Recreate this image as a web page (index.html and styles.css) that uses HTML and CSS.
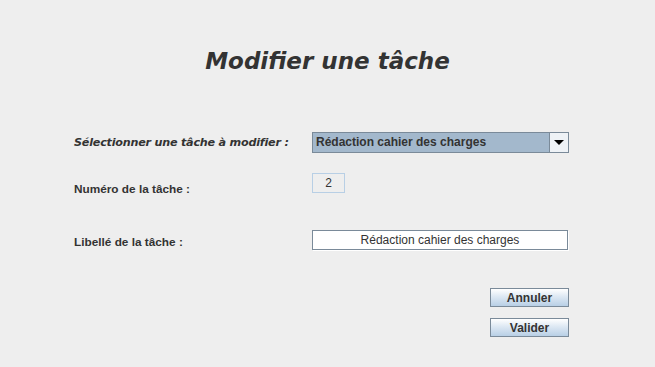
FILE: index.html
```html
<!DOCTYPE HTML>
<html lang="fr">
<head>
  <title>Modifier une tâche</title>
  <meta content="text/html;charset=utf-8" http-equiv="Content-type"/>
  <link rel="stylesheet" href="styles.css">
</head>
<body>
<h1 class="title">Modifier une tâche</h1>
<div class="form">
  <div class="row row-select">
    <label class="label label-italic">Sélectionner une tâche à modifier :</label>
    <div class="combo">
      <span class="combo-value">Rédaction cahier des charges</span>
      <span class="combo-arrow"><span class="triangle"></span></span>
    </div>
  </div>
  <div class="row row-num">
    <label class="label">Numéro de la tâche :</label>
    <div class="num-field">2</div>
  </div>
  <div class="row row-lib">
    <label class="label">Libellé de la tâche :</label>
    <div class="text-field">Rédaction cahier des charges</div>
  </div>
  <div class="actions">
    <button class="btn">Annuler</button>
    <button class="btn">Valider</button>
  </div>
</div>
</body>
</html>
```

FILE: styles.css
```css
body {
    margin: 0;
    background-color: #eeeeee;
    color: #333333;
    font-family: 'Liberation Sans', Arial, sans-serif;
    font-size: 12px;
}

.title {
    margin: 0;
    padding-top: 44px;
    height: 34px;
    line-height: 34px;
    text-align: center;
    font-family: 'DejaVu Sans', Verdana, sans-serif;
    font-style: italic;
    font-weight: bold;
    font-size: 23px;
    color: #333333;
}

.form {
    padding-left: 74px;
}

.row {
    display: flex;
}

.label {
    width: 238px;
    font-weight: bold;
    font-size: 11.8px;
    white-space: nowrap;
}

.label-italic {
    font-family: 'DejaVu Sans', Verdana, sans-serif;
    font-style: italic;
    font-size: 11.2px;
    letter-spacing: -0.23px;
}

.row-select {
    margin-top: 54px;
    height: 21px;
    align-items: center;
}

/* combo box, Metal look */
.combo {
    display: flex;
    width: 257px;
    height: 21px;
    box-sizing: border-box;
    border: 1px solid #7a8a99;
    background: #a3b8cc;
}

.combo-value {
    flex: auto;
    padding-left: 3px;
    line-height: 19px;
    font-weight: bold;
    color: #333333;
}

.combo-arrow {
    width: 18px;
    border-left: 1px solid #7a8a99;
    background: #eef2f6;
    display: flex;
    align-items: center;
    justify-content: center;
}

.triangle {
    width: 0;
    height: 0;
    border-left: 5px solid transparent;
    border-right: 5px solid transparent;
    border-top: 5px solid #000;
}

.row-num {
    margin-top: 20px;
    height: 22px;
}

.row-num .label {
    padding-top: 9px;
}

.num-field {
    width: 33px;
    height: 20px;
    box-sizing: border-box;
    border: 1px solid #b8cfe5;
    text-align: center;
    line-height: 18px;
    color: #333333;
}

.row-lib {
    margin-top: 35px;
    height: 20px;
}

.row-lib .label {
    padding-top: 5px;
}

.text-field {
    width: 256px;
    height: 20px;
    box-sizing: border-box;
    border: 1px solid #7a8a99;
    box-shadow: 1px 1px 0 #ffffff;
    background: #ffffff;
    text-align: center;
    line-height: 18px;
    color: #333333;
}

.actions {
    display: flex;
    flex-direction: column;
    align-items: flex-end;
    gap: 11px;
    width: 495px;
    margin-top: 38px;
}

.btn {
    width: 79px;
    height: 19px;
    padding: 0;
    border: 1px solid #7a8a99;
    background: linear-gradient(#ffffff, #dde8f3 45%, #b8cfe5);
    font-family: 'Liberation Sans', Arial, sans-serif;
    font-weight: bold;
    font-size: 12px;
    color: #333333;
}
```
